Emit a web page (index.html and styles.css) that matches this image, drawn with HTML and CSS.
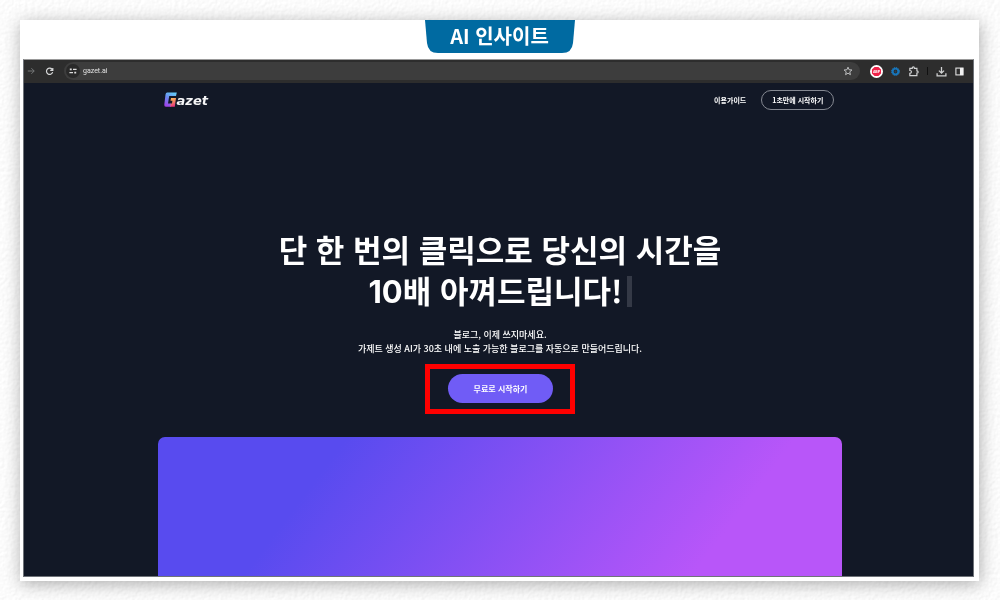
FILE: index.html
```html
<!DOCTYPE html>
<html lang="ko">
<head>
<meta charset="utf-8">
<meta name="viewport" content="width=device-width, initial-scale=1">
<title>AI 인사이트</title>
<link rel="stylesheet" href="styles.css">
</head>
<body>
<svg class="paper" aria-hidden="true">
  <filter id="grain" x="0" y="0" width="100%" height="100%">
    <feTurbulence type="fractalNoise" baseFrequency="0.3" numOctaves="3" seed="4" result="noise"/>
    <feDiffuseLighting in="noise" surfaceScale="0.25" diffuseConstant="1.12" lighting-color="#ffffff">
      <feDistantLight azimuth="225" elevation="60"/>
    </feDiffuseLighting>
  </filter>
  <rect width="100%" height="100%" filter="url(#grain)"/>
</svg>
<main class="card">
  <div class="card-head">
    <svg class="tab-shape" viewBox="0 0 150 33" preserveAspectRatio="none" aria-hidden="true"><path d="M0 0H150L148 23Q147 33 137 33H13Q3 33 2 23Z" fill="#006aa1"/></svg>
    <h2 class="tab-title">AI 인사이트</h2>
  </div>
  <section class="browser">
    <div class="toolbar">
      <button class="tool" aria-label="앞으로"><svg viewBox="0 0 10 10" width="8" height="8" fill="none" stroke="#77797a" stroke-width="1.2"><path d="M1 5H9M5.5 1.5L9 5L5.5 8.5"/></svg></button>
      <button class="tool" aria-label="새로고침"><svg viewBox="0 0 10 10" width="9" height="9" fill="none" stroke="#d6d7d8" stroke-width="1.3"><path d="M8.2 3A3.5 3.5 0 1 0 8.5 5.7M8.7 1V3.8H5.8"/></svg></button>
      <div class="address">
        <span class="site"><svg viewBox="0 0 10 10" width="8" height="8" fill="none" stroke="#dedede" stroke-width="1.4"><path d="M5 3H9.5M.5 7H5"/><path d="M1 3H3.4M6.6 7H9" stroke-width="2.4"/></svg></span>
        <input class="url" type="text" value="gazet.ai" aria-label="주소">
        <button class="tool" aria-label="북마크"><svg viewBox="0 0 12 12" width="10" height="10" fill="none" stroke="#c8c9ca" stroke-width="1.1"><path d="M6 1.4L7.3 4.5L10.7 4.8L8.1 7L8.9 10.4L6 8.6L3.1 10.4L3.9 7L1.3 4.8L4.7 4.5Z"/></svg></button>
      </div>
      <div class="extensions">
        <button class="tool" aria-label="ABP"><svg viewBox="0 0 14 14" width="13" height="13"><circle cx="7" cy="7" r="7" fill="#fff"/><path d="M4.9 2.1H9.1L11.9 4.9V9.1L9.1 11.9H4.9L2.1 9.1V4.9Z" fill="#ee2148"/><text x="7" y="8.6" text-anchor="middle" class="abp">ABP</text></svg></button>
        <button class="tool" aria-label="확장 프로그램"><svg viewBox="0 0 10 10" width="9" height="9" fill="none"><circle cx="5" cy="5" r="3.2" stroke="#1676bd" stroke-width="2.2"/><circle cx="5" cy="5" r="4.4" stroke="#2383c8" stroke-width="1" stroke-dasharray="1.3 1"/><circle cx="5" cy="5" r="1" fill="#214660"/></svg></button>
        <button class="tool" aria-label="확장"><svg viewBox="0 0 12 12" width="11" height="11" fill="none" stroke="#d0d1d2" stroke-width="1.3"><path d="M2 2.5H4.6Q4.6 1 5.8 1Q7 1 7 2.5H9.7V5.3Q11.1 5.3 11.1 6.5Q11.1 7.7 9.7 7.7V10.5H2V8Q3.8 8 3.8 6.4Q3.8 4.9 2 4.9Z"/></svg></button>
        <span class="divider"></span>
        <button class="tool" aria-label="다운로드"><svg viewBox="0 0 12 12" width="11" height="11" fill="none" stroke="#d0d1d2" stroke-width="1.4"><path d="M6 1V7.5M3.2 5L6 7.8L8.8 5M1.2 8V10.8H10.8V8"/></svg></button>
        <button class="tool" aria-label="사이드 패널"><svg viewBox="0 0 10 10" width="9" height="9"><rect x="1" y="1.2" width="8" height="7.6" fill="none" stroke="#e2e2e2" stroke-width="1.2"/><path d="M5.5 1H9V9H5.5Z" fill="#f0f0f0"/></svg></button>
      </div>
    </div>
    <div class="site-page">
      <header class="site-header">
        <a class="logo" href="#" aria-label="Gazet"><svg viewBox="0 0 13 16" width="13" height="16" aria-hidden="true"><defs><linearGradient id="g1" x1="0.6" y1="0" x2="0.2" y2="1"><stop offset="0" stop-color="#63c6f4"/><stop offset=".45" stop-color="#6d83ed"/><stop offset="1" stop-color="#a43de9"/></linearGradient><linearGradient id="g2" x1="0" y1="0" x2=".3" y2="1"><stop offset="0" stop-color="#ffc15c"/><stop offset=".55" stop-color="#f3805f"/><stop offset="1" stop-color="#e9387e"/></linearGradient></defs><path d="M3.2 .5H12.8L12 4H5.2L4 11.5H7V14.8H2Q0 14.8 .3 12.5L1.5 2.4Q1.8 .5 3.2 .5Z" fill="url(#g1)"/><path d="M7 6H12L10.8 14.8H6.2L6.7 11.6H8L8.4 8.8H6.5Z" fill="url(#g2)"/></svg><span class="logo-text">azet</span></a>
        <nav class="nav"><a class="guide" href="#">이용가이드</a><a class="start" href="#">1초만에 시작하기</a></nav>
      </header>
      <div class="hero">
        <h1 class="headline">단 한 번의 클릭으로 당신의 시간을<br><span class="figure">10</span>배 아껴드립니다!<span class="caret"></span></h1>
        <p class="lead">블로그, 이제 쓰지마세요.<br>가제트 생성 AI가 30초 내에 노출 가능한 블로그를 자동으로 만들어드립니다.</p>
        <div class="highlight"><button class="cta">무료로 시작하기</button></div>
      </div>
      <div class="showcase"></div>
    </div>
  </section>
</main>
</body>
</html>
```
FILE: styles.css
```css
* {
  box-sizing: border-box;
}

body {
  display: flex;
  min-height: 100vh;
  margin: 0;
  padding: 20px 21px 19px 20px;
  background: #f5f5f5;
  font-family: "Noto Sans CJK KR", sans-serif;
}

.paper {
  position: fixed;
  inset: 0;
  width: 100%;
  height: 100%;
  z-index: -1;
}

button {
  border: 0;
  padding: 0;
  font-family: inherit;
}

a {
  color: inherit;
  text-decoration: none;
}

.card {
  display: flex;
  flex: 1;
  flex-direction: column;
  min-width: 0;
  padding: 0 5px 4px 3px;
  background: #fff;
  box-shadow: 1px 3px 16px rgba(0, 0, 0, 0.32);
}

.card-head {
  display: grid;
  justify-content: center;
  align-items: start;
  grid-template-columns: 150px;
  height: 39px;
  margin-left: 2px;
}

.tab-shape,
.tab-title {
  grid-area: 1 / 1;
  width: 150px;
  height: 33px;
}

.tab-title {
  margin: 0;
  color: #fff;
  font-size: 20px;
  font-weight: 700;
  line-height: 32px;
  text-align: center;
}

.browser {
  display: flex;
  flex: 1;
  flex-direction: column;
  border: 1px solid #6f7379;
  border-top-color: #999;
  background: #121826;
}

.toolbar {
  display: flex;
  align-items: center;
  height: 23px;
  padding: 0 9px 1px 3px;
  gap: 10px;
  background: #2d2d2d;
}

.tool {
  display: grid;
  place-items: center;
  background: none;
}

.address {
  display: flex;
  flex: 1;
  align-items: center;
  height: 18px;
  padding: 0 7px 0 2px;
  border-radius: 9px;
  background: #3d3d3d;
}

.site {
  display: grid;
  place-items: center;
  width: 14px;
  height: 14px;
  border-radius: 7px;
  background: #292929;
}

.url {
  flex: 1;
  min-width: 0;
  padding: 0;
  margin-left: 3px;
  border: 0;
  background: none;
  color: #e2e2e2;
  font: 7px Roboto, sans-serif;
}

.extensions {
  display: flex;
  align-items: center;
  gap: 8px;
}

.abp {
  fill: #fff;
  font: bold 4px Roboto, sans-serif;
}

.divider {
  width: 1px;
  height: 8px;
  background: #111;
}

.site-page {
  display: flex;
  flex: 1;
  flex-direction: column;
  align-items: center;
  padding-left: 3px;
  color: #fff;
}

.site-header {
  display: flex;
  justify-content: space-between;
  align-items: center;
  width: 72.4%;
  height: 34px;
  padding: 0 8px 0 6px;
}

.logo {
  display: flex;
  align-items: flex-end;
}

.logo-text {
  color: #f5f5f6;
  font: italic 700 13px/14px "DejaVu Sans", sans-serif;
}

.nav {
  display: flex;
  align-items: center;
  gap: 15px;
  font-size: 7px;
  font-weight: 700;
}

.start {
  padding: 0 10px;
  border: 1px solid #858992;
  border-radius: 10px;
  line-height: 18px;
}

.hero {
  display: flex;
  flex-direction: column;
  align-items: center;
  padding: 111px 0 23px;
  text-align: center;
}

.headline {
  margin: 0;
  font-size: 31px;
  font-weight: 700;
  line-height: 41px;
}

.figure {
  font-family: Inter, sans-serif;
}

.caret {
  display: inline-block;
  width: 5px;
  height: 31px;
  margin-left: 4px;
  background: #343946;
  vertical-align: -4px;
}

.lead {
  margin: 16px 0 8px;
  font-size: 9px;
  font-weight: 500;
  line-height: 14px;
}

.highlight {
  padding: 5px 17px 6px 18px;
  border: 5px solid #f00;
}

.cta {
  display: block;
  width: 105px;
  height: 29px;
  border-radius: 15px;
  background: #705cf6;
  color: #fff;
  font-size: 8px;
  font-weight: 700;
}

.showcase {
  flex: 1;
  width: 72.4%;
  min-height: 120px;
  border-radius: 7px 7px 0 0;
  background: linear-gradient(127deg, #584bef 24%, #b856f9 81%);
}
```
